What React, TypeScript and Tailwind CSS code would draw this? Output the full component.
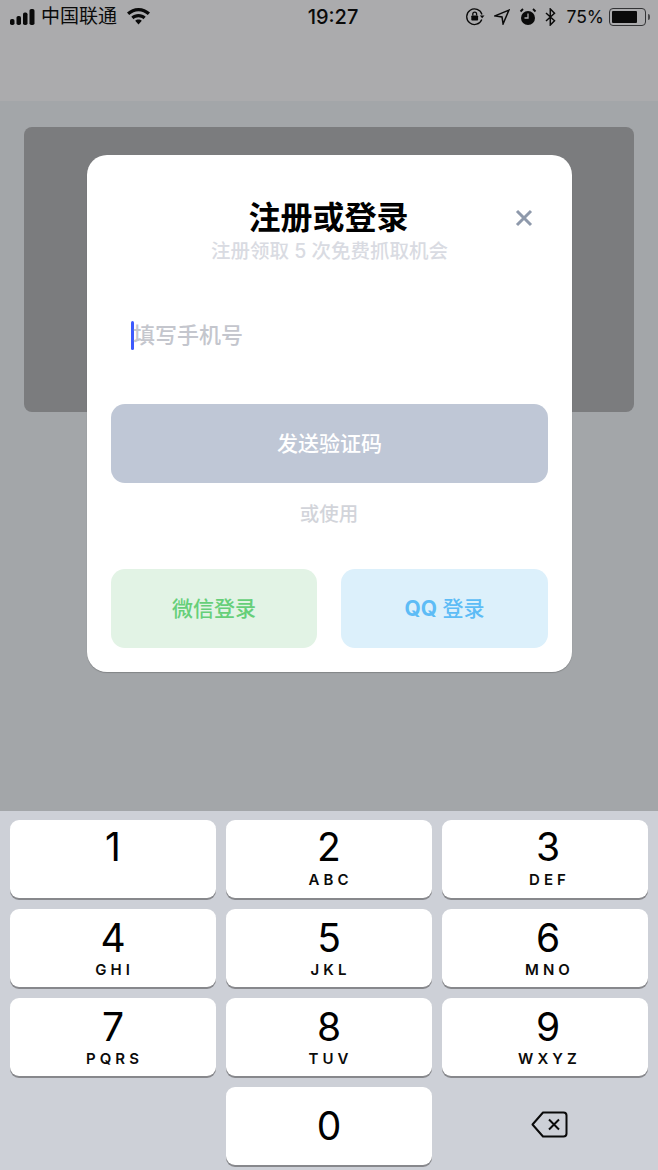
const keys = [
  { digit: "1", letters: "", col: "", row: "pt-[7px]", gap: "mt-[5px]" },
  { digit: "2", letters: "ABC", col: "", row: "pt-[7px]", gap: "mt-[5px]" },
  { digit: "3", letters: "DEF", col: "pl-[6px]", row: "pt-[7px]", gap: "mt-[5px]" },
  { digit: "4", letters: "GHI", col: "", row: "pt-[9px]", gap: "mt-1" },
  { digit: "5", letters: "JKL", col: "", row: "pt-[9px]", gap: "mt-1" },
  { digit: "6", letters: "MNO", col: "pl-[6px]", row: "pt-[9px]", gap: "mt-1" },
  { digit: "7", letters: "PQRS", col: "", row: "pt-[9px]", gap: "mt-1" },
  { digit: "8", letters: "TUV", col: "", row: "pt-[9px]", gap: "mt-1" },
  { digit: "9", letters: "WXYZ", col: "pl-[6px]", row: "pt-[9px]", gap: "mt-1" },
];

const cjk = "font-['Inter','Noto_Sans_CJK_SC',sans-serif]";

const Key = ({ digit, letters, col, row, gap }: { digit: string; letters: string; col: string; row: string; gap: string }) => (
  <div className={`flex h-[78px] flex-col items-center rounded-[9px] bg-white shadow-[0_2px_0_#87888c] ${col} ${row}`}>
    <span className="h-10 text-[39px] leading-10 text-black">{digit}</span>
    <span className={`h-4 pl-[3px] text-[15px] font-semibold leading-4 tracking-[0.27em] text-[#0b0b0b] ${gap}`}>
      {letters}
    </span>
  </div>
);

const StatusBar = () => (
  <div className="flex h-8 items-center pl-[10px] pr-2 pt-px text-[#0a0a0a]">
    <div className="flex flex-1 items-center">
      <svg width="25" height="16" viewBox="0 0 25 16" fill="#0a0a0a">
        <rect x="0" y="10" width="4.500" height="6" rx="1.800" />
        <rect x="6.500" y="7" width="4.500" height="9" rx="1.800" />
        <rect x="13" y="3.500" width="4.500" height="12.500" rx="1.800" />
        <rect x="19.500" y="0" width="5" height="16" rx="1.800" />
      </svg>
      <span className="ml-[6px] text-[19px] leading-6">中国联通</span>
      <svg className="ml-[10px]" width="23" height="17" viewBox="0 0 23 17" fill="#0a0a0a">
        <path d="M11.500 0C7 0 3.200 1.700 0 4.600l2.200 2.400C5 4.600 8 3.200 11.500 3.200S18 4.600 20.800 7L23 4.600C19.800 1.700 16 0 11.500 0Z" />
        <path d="M11.500 6C8.700 6 6.300 7 4.300 8.800l2.300 2.400c1.300-1.200 3-1.900 4.900-1.900s3.600.7 4.900 1.900l2.300-2.400C16.700 7 14.300 6 11.500 6Z" />
        <path d="M11.500 11.500c-1.300 0-2.500.5-3.300 1.300l3.300 3.600 3.300-3.600c-.8-.8-2-1.300-3.300-1.300Z" />
      </svg>
    </div>
    <span className="ml-[6px] text-[20px] font-medium leading-6">19:27</span>
    <div className="flex flex-1 items-center justify-end">
      <svg width="19" height="18" viewBox="0 0 19 18" fill="none" stroke="#0a0a0a" strokeWidth="1.300">
        <path d="M15.800 11.500A7.800 7.800 0 1 1 16 6.500" />
        <path d="M13.800 7.500h4.700l-2.350 2.800Z" fill="#0a0a0a" stroke="none" />
        <rect x="5.300" y="7.500" width="6.800" height="5" rx="0.800" fill="#0a0a0a" stroke="none" />
        <path d="M6.800 7.500V6a1.900 1.900 0 0 1 3.800 0v1.500" />
      </svg>
      <svg className="ml-[9px]" width="16" height="16" viewBox="0 0 15 15" fill="none" stroke="#0a0a0a" strokeWidth="1.400" strokeLinejoin="miter">
        <path d="M14 1 1 6.500l6.500 1 1 6.500Z" />
      </svg>
      <svg className="ml-[9px]" width="18" height="18" viewBox="0 0 17 18">
        <circle cx="8.500" cy="10" r="7" fill="#0a0a0a" />
        <path d="M8.500 5.500V10H5" fill="none" stroke="#ababad" strokeWidth="1.300" />
        <path d="M1 3.500 3.500 1M16 3.500 13.500 1" fill="none" stroke="#0a0a0a" strokeWidth="1.800" />
      </svg>
      <svg className="ml-2" width="11" height="18" viewBox="0 0 11 18" fill="none" stroke="#0a0a0a" strokeWidth="1.500">
        <path d="M1 5 9.500 12.800 5.300 17V1L9.500 5.200 1 13" />
      </svg>
      <span className="ml-[10px] text-[17.500px] leading-6">75%</span>
      <div className="ml-[5px] flex h-[18px] w-[37px] items-center rounded-[4px] border border-[#333436] p-[2px]">
        <div className="h-full w-[25px] rounded-[1px] bg-[#0a0a0a]" />
      </div>
      <div className="ml-[2px] h-[6px] w-[2px] rounded-r-sm bg-[#4a4a4c]" />
    </div>
  </div>
);

const LoginModal = () => (
  <div className="absolute left-[87px] top-[54px] flex h-[517px] w-[485px] flex-col rounded-[20px] bg-white px-6 shadow-[0_1px_1px_rgba(0,0,0,0.2)]">
    <div className="relative mt-[44px] pr-[2px] text-center">
      <h1 className="text-[32px] font-semibold leading-[38px] text-black">注册或登录</h1>
      <button className="absolute right-[15px] top-[10px]">
        <svg width="18" height="18" viewBox="0 0 18 18" fill="none" stroke="#8e99ab" strokeWidth="3">
          <path d="M2 2 16 16M16 2 2 16" />
        </svg>
      </button>
    </div>
    <p className="mt-[2px] text-center text-[19.500px] font-medium leading-6 text-[#d9dbe2]">
      注册领取 5 次免费抓取机会
    </p>

    {/* phone input with caret */}
    <div className="mt-[57px] flex h-[30px] items-center pl-5">
      <div className="h-[29px] w-[3px] rounded-sm bg-[#3d5afe]" />
      <span className="-ml-px text-[22px] font-medium leading-[30px] text-[#c4c6cd]">填写手机号</span>
    </div>

    <button className="mt-[54px] h-[79px] w-full rounded-[14px] bg-[#bfc7d6] text-[21px] font-medium text-white">
      发送验证码
    </button>
    <p className="mt-[18px] pr-px text-center text-[19.500px] font-medium leading-[26px] text-[#d2d4da]">或使用</p>

    <div className="mt-[42px] flex gap-6">
      <button className="h-[79px] w-[206px] rounded-[14px] bg-[#e2f3e5] text-[21px] font-medium text-[#66cf79]">
        微信登录
      </button>
      <button className="h-[79px] flex-1 rounded-[14px] bg-[#dcf0fb] text-[21px] font-medium text-[#5dbcf6]">
        <span className="font-bold">QQ</span> 登录
      </button>
    </div>
  </div>
);

const App = () => {
  return (
    <div className={`flex h-[1170px] w-[658px] flex-col overflow-hidden bg-[#a3a6a9] ${cjk}`}>
      <div className="h-[101px] bg-[#ababad]">
        <StatusBar />
      </div>

      <div className="relative flex-1 px-6 pt-[26px]">
        <div className="h-[285px] rounded-lg bg-[#7b7c7e]" />
        <LoginModal />
      </div>

      {/* number pad */}
      <div className="grid h-[359px] grid-cols-3 content-start gap-x-[10px] gap-y-[11px] bg-[#cdd0d7] px-[10px] pt-[9px]">
        {keys.map((k) => (
          <Key key={k.digit} digit={k.digit} letters={k.letters} col={k.col} row={k.row} gap={k.gap} />
        ))}
        <div />
        <div className="flex h-[78px] items-center justify-center rounded-[9px] bg-white text-[39px] leading-10 text-black shadow-[0_2px_0_#87888c]">
          0
        </div>
        <div className="flex h-[78px] items-center justify-center pb-[3px] pl-[9px]">
          <svg width="37" height="27" viewBox="0 0 37 27" fill="none" stroke="#0a0a0a" strokeWidth="2" strokeLinejoin="round">
            <path d="M12 1.500h20.500a3 3 0 0 1 3 3v18a3 3 0 0 1-3 3H12L1.500 13.500Z" />
            <path d="M18 8.500 28 18.500M28 8.500 18 18.500" />
          </svg>
        </div>
      </div>
    </div>
  );
};

export default App;
